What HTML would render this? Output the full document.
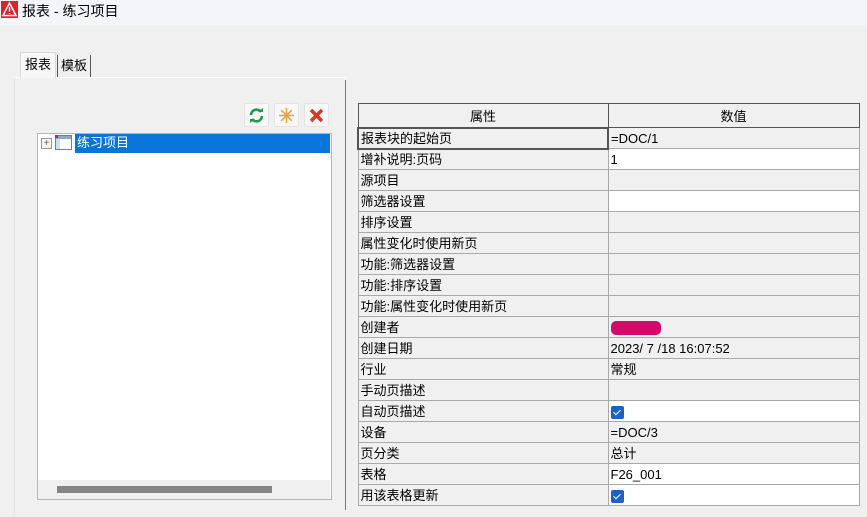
<!DOCTYPE html>
<html><head><meta charset="utf-8"><style>
*{margin:0;padding:0;box-sizing:border-box}
body{width:867px;height:505px;background:#f0f0f0;font-family:"Liberation Sans","Noto Sans CJK SC",sans-serif;font-size:13px;color:#000;position:relative;overflow:hidden}
.abs{position:absolute}
.title{left:0;top:0;width:867px;height:25px;background:#f3f5f9}
.tab{top:52px;height:25px;font-size:13px;line-height:24px;padding:0 4px}
.btn{top:103px;width:25px;height:24px;background:#f7f7f7;border:1px solid #e4e4e4;border-radius:2px;display:flex;align-items:center;justify-content:center}
table{border-collapse:collapse;table-layout:fixed}
td{border:1px solid #a9a9a9;height:21px;padding:0 2px;font-size:13px;line-height:19px;white-space:nowrap;overflow:hidden;background:#f0f0f0}
td.w{background:#fff}
th{border:1px solid #a9a9a9;height:24px;font-weight:normal;font-size:13px;background:#f0f0f0}
.cb{display:inline-block;width:13px;height:13px;background:#1a62c8;border-radius:2px;vertical-align:middle;position:relative}
.cb:after{content:"";position:absolute;left:4px;top:2px;width:3px;height:6px;border:solid #fff;border-width:0 1px 1px 0;transform:rotate(45deg)}
</style></head><body>
<div class="abs title"></div>
<svg class="abs" style="left:1px;top:1px" width="17" height="17" viewBox="0 0 17 17"><rect width="17" height="17" fill="#e0202a"/><path d="M8.5 2 L15 14.5 H2 Z" fill="none" stroke="#fff" stroke-width="1.5"/><path d="M8.5 6v4.5M8.5 12v1" stroke="#fff" stroke-width="1.5"/></svg>
<div class="abs" style="left:22px;top:2px;font-size:14px;line-height:18px">报表 - 练习项目</div>

<div class="abs" style="left:14px;top:77px;width:332px;height:440px;border-top:1px solid #fff;border-left:1px solid #e3e3e3"></div>
<div class="abs tab" style="left:20px;background:#f7f7f7;border:1px solid #d9d9d9;border-bottom:none;height:26px">报表</div>
<div class="abs tab" style="left:57px;border-right:1px solid #555;border-left:1px solid #555;top:55px;height:22px;line-height:22px;padding:0 3px">模板</div>
<div class="abs" style="left:345px;top:80px;width:1px;height:430px;background:#777"></div>

<div class="abs btn" style="left:244px"><svg width="17" height="17" viewBox="0 0 17 17"><path d="M3 8a5.5 5.5 0 0 1 10-3" fill="none" stroke="#1e9a4a" stroke-width="2.6"/><path d="M14 9a5.5 5.5 0 0 1-10 3" fill="none" stroke="#1e9a4a" stroke-width="2.6"/><path d="M10 5h5V1z M7 12H2v4z" fill="#1e9a4a"/></svg></div>
<div class="abs btn" style="left:274px"><svg width="17" height="17" viewBox="0 0 17 17" stroke="#e8a040" stroke-width="1.5"><path d="M8.5 1v15M1 8.5h15M3.2 3.2l10.6 10.6M13.8 3.2L3.2 13.8"/></svg></div>
<div class="abs btn" style="left:304px"><svg width="17" height="17" viewBox="0 0 17 17"><path d="M3 3l11 11M14 3L3 14" stroke="#d03a20" stroke-width="3.5"/></svg></div>

<div class="abs" style="left:37px;top:133px;width:295px;height:367px;background:#fff;border:1px solid #b5b5b5"></div>
<div class="abs" style="left:41px;top:138px;width:11px;height:11px;border:1px solid #999;background:#f4f4f4;font-size:10px;line-height:9px;text-align:center;color:#666">+</div>
<div class="abs" style="left:55px;top:135px;width:17px;height:15px;border:1px solid #6b7f99;background:#fff"><div style="height:3px;background:#8aa6c8"></div><div style="position:absolute;left:0;top:3px;width:4px;height:10px;background:#cfe0f2"></div><div style="position:absolute;left:-1px;top:-1px;width:3px;height:3px;background:#e02020"></div></div>
<div class="abs" style="left:75px;top:134px;width:255px;height:19px;background:#0a74d9;color:#fff;font-size:13px;line-height:18px;padding-left:2px">练习项目</div>
<div class="abs" style="left:38px;top:480px;width:292px;height:19px;background:#f0f0f0"></div>
<div class="abs" style="left:57px;top:486px;width:215px;height:7px;background:#858585"></div>

<table class="abs" style="left:357px;top:103px;width:501px">
<colgroup><col style="width:250px"><col style="width:251px"></colgroup>
<tr><th style="border:1px solid #555">属性</th><th style="border:1px solid #555">数值</th></tr>
<tr><td style="border:2px solid #555">报表块的起始页</td><td>=DOC/1</td></tr>
<tr><td>增补说明:页码</td><td class="w">1</td></tr>
<tr><td>源项目</td><td></td></tr>
<tr><td>筛选器设置</td><td class="w"></td></tr>
<tr><td>排序设置</td><td></td></tr>
<tr><td>属性变化时使用新页</td><td></td></tr>
<tr><td>功能:筛选器设置</td><td></td></tr>
<tr><td>功能:排序设置</td><td></td></tr>
<tr><td>功能:属性变化时使用新页</td><td></td></tr>
<tr><td>创建者</td><td><span style="display:inline-block;width:50px;height:14px;background:#d40a6a;border-radius:5px;vertical-align:middle"></span></td></tr>
<tr><td>创建日期</td><td>2023/ 7 /18 16:07:52</td></tr>
<tr><td>行业</td><td>常规</td></tr>
<tr><td>手动页描述</td><td></td></tr>
<tr><td>自动页描述</td><td class="w"><span class="cb"></span></td></tr>
<tr><td>设备</td><td>=DOC/3</td></tr>
<tr><td>页分类</td><td>总计</td></tr>
<tr><td>表格</td><td class="w">F26_001</td></tr>
<tr><td>用该表格更新</td><td class="w"><span class="cb"></span></td></tr>
</table>
</body></html>
